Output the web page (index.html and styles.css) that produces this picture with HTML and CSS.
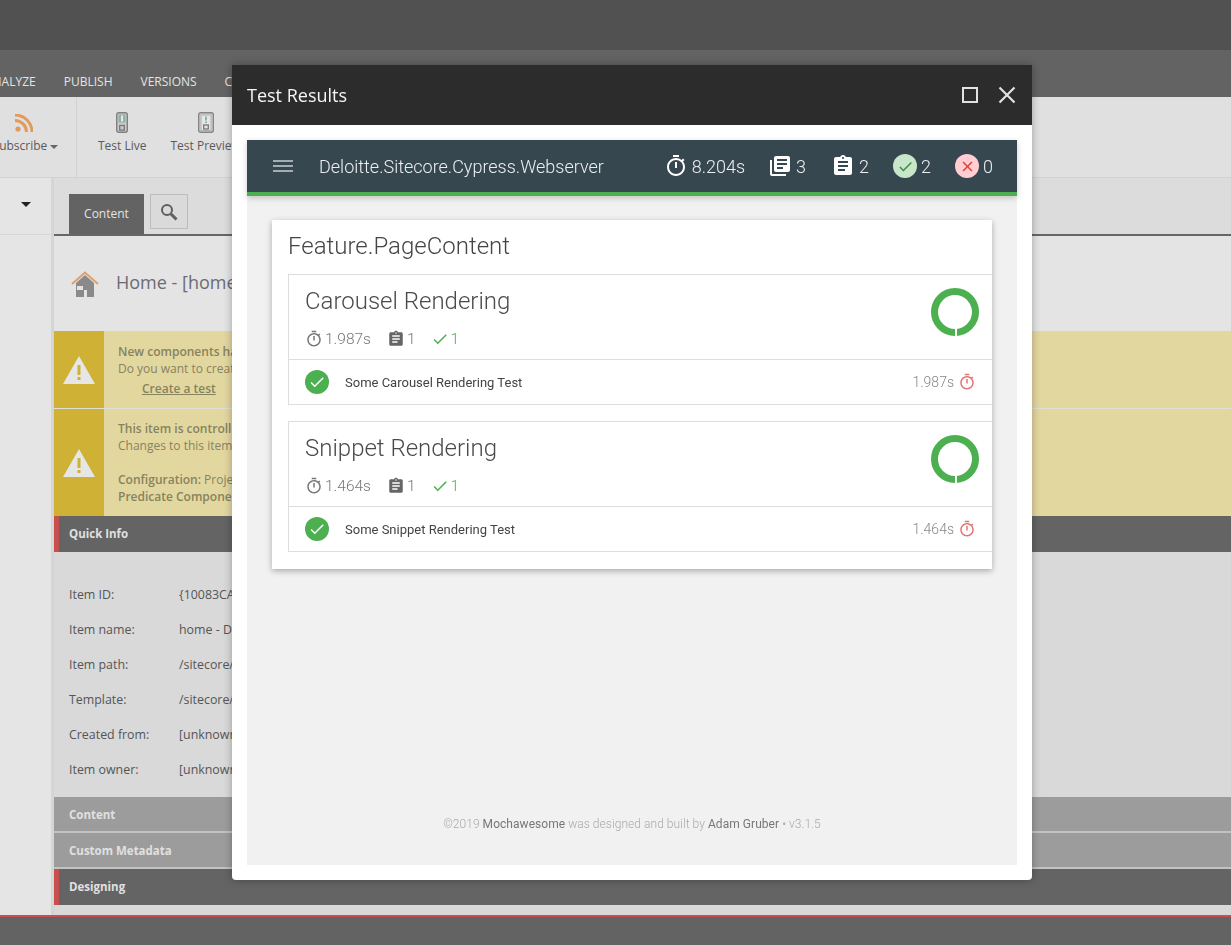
FILE: index.html
```html
<!DOCTYPE html>
<html lang="en">

<head>
    <meta charset="utf-8">
    <title>Test Results</title>
    <link rel="stylesheet" href="styles.css">
</head>

<body>
    <!-- material icons used by the report -->
    <svg class="defs" width="0" height="0">
        <symbol id="i-timer" viewBox="0 0 24 24"><path d="M15 1H9v2h6V1zm-4 13h2V8h-2v6zm8.03-6.61l1.42-1.42c-.43-.51-.9-.99-1.41-1.41l-1.42 1.42C16.07 4.74 14.12 4 12 4c-4.97 0-9 4.03-9 9s4.02 9 9 9 9-4.03 9-9c0-2.12-.74-4.07-1.97-5.61zM12 20c-3.87 0-7-3.13-7-7s3.13-7 7-7 7 3.13 7 7-3.13 7-7 7z"/></symbol>
        <symbol id="i-books" viewBox="0 0 24 24"><path d="M4 6H2v14c0 1.1.9 2 2 2h14v-2H4V6zm16-4H8c-1.1 0-2 .9-2 2v12c0 1.1.9 2 2 2h12c1.1 0 2-.9 2-2V4c0-1.1-.9-2-2-2zm-1 9H9V9h10v2zm-4 4H9v-2h6v2zm4-8H9V5h10v2z"/></symbol>
        <symbol id="i-assignment" viewBox="0 0 24 24"><path d="M19 3h-4.18C14.4 1.84 13.3 1 12 1c-1.3 0-2.4.84-2.82 2H5c-1.1 0-2 .9-2 2v14c0 1.1.9 2 2 2h14c1.1 0 2-.9 2-2V5c0-1.1-.9-2-2-2zm-7 0c.55 0 1 .45 1 1s-.45 1-1 1-1-.45-1-1 .45-1 1-1zm2 14H7v-2h7v2zm3-4H7v-2h10v2zm0-4H7V7h10v2z"/></symbol>
        <symbol id="i-check" viewBox="0 0 24 24"><path d="M9 16.17L4.83 12l-1.42 1.41L9 19 21 7l-1.41-1.41z"/></symbol>
        <symbol id="i-close" viewBox="0 0 24 24"><path d="M19 6.41L17.59 5 12 10.59 6.41 5 5 6.41 10.59 12 5 17.59 6.41 19 12 13.41 17.59 19 19 17.59 13.41 12z"/></symbol>
        <symbol id="i-warning" viewBox="0 0 32 28"><path d="M16 0L32 28H0z" fill="#e6e6e6"/><path d="M14.500 9h3v10h-3zM14.500 21h3v3h-3z" fill="#cfb135"/></symbol>
        <symbol id="i-live" viewBox="0 0 12 21"><rect x="0.700" y="0.700" width="10.600" height="19.600" rx="2" fill="#c9c9c9" stroke="#808080" stroke-width="1.400"/><rect x="2.500" y="2.500" width="7" height="8" fill="#8fb3a4"/><rect x="5" y="3.500" width="2" height="6" fill="#e8e8e8"/><rect x="3.700" y="13.500" width="4.600" height="4.600" fill="none" stroke="#777" stroke-width="1.300"/></symbol>
        <symbol id="i-preview" viewBox="0 0 16 21"><rect x="0.700" y="0.700" width="14.600" height="19.600" rx="2" fill="#d4d4d4" stroke="#858585" stroke-width="1.400"/><rect x="3" y="3" width="10" height="15.500" fill="#e6e6e6" stroke="#b0b0b0"/><rect x="7" y="4.500" width="2" height="4" fill="#8fb3a4"/><rect x="7" y="9.500" width="2" height="1.500" fill="#8fb3a4"/><rect x="5.700" y="13" width="4.600" height="4" fill="none" stroke="#777" stroke-width="1.300"/></symbol>
    </svg>

    <div class="app">
        <div class="topbar"></div>

        <nav class="menu">
            <span>Analyze</span>
            <span>Publish</span>
            <span>Versions</span>
            <span>Configure</span>
        </nav>

        <div class="ribbon">
            <div class="ribbon-group first">
                <svg class="rss" viewBox="0 0 18 18" width="18" height="18">
                    <circle cx="3" cy="15" r="2.600" fill="#e09a5c"/>
                    <path d="M0 6.500a11.500 11.500 0 0 1 11.500 11.500" fill="none" stroke="#e09a5c" stroke-width="3"/>
                    <path d="M0 1a17 17 0 0 1 17 17" fill="none" stroke="#e09a5c" stroke-width="3"/>
                </svg>
                <span class="ribbon-label">Subscribe <i class="caret"></i></span>
            </div>
            <div class="ribbon-group">
                <div class="ribbon-btn">
                    <svg width="12" height="21"><use href="#i-live"/></svg>
                    <span class="ribbon-label">Test Live</span>
                </div>
                <div class="ribbon-btn">
                    <svg width="16" height="21"><use href="#i-preview"/></svg>
                    <span class="ribbon-label">Test Preview</span>
                </div>
            </div>
        </div>

        <div class="main">
            <aside class="side">
                <div class="side-head"><i class="caret dark"></i></div>
            </aside>

            <section class="editor">
                <div class="tabs">
                    <div class="tab">Content</div>
                    <div class="search">
                        <svg viewBox="0 0 18 18" width="18" height="18">
                            <circle cx="7" cy="7" r="5" fill="none" stroke="#5f5f5f" stroke-width="2"/>
                            <path d="M11 11l5.500 5.500" stroke="#5f5f5f" stroke-width="3"/>
                        </svg>
                    </div>
                </div>

                <div class="page-head">
                    <svg viewBox="0 0 28 26" width="28" height="26">
                        <path d="M5 12L14 4l9 8v14h-7v-7h-3v7H5z" fill="#8a8a8a"/>
                        <rect x="6" y="15" width="6" height="4" fill="#e4e4e4"/>
                        <path d="M1 13L14 1.500 27 13" fill="none" stroke="#e09f6c" stroke-width="2"/>
                    </svg>
                    <span>Home - [home - Digital]</span>
                </div>

                <div class="warn warn-a">
                    <div class="warn-icon"><svg width="32" height="28"><use href="#i-warning"/></svg></div>
                    <div class="warn-text">
                        <b>New components have been added to this page.</b><br>
                        Do you want to create a test?
                        <a class="warn-link">Create a test</a>
                    </div>
                </div>
                <div class="warn warn-b">
                    <div class="warn-icon"><svg width="32" height="28"><use href="#i-warning"/></svg></div>
                    <div class="warn-text">
                        <b>This item is controlled by Unicorn</b><br>
                        Changes to this item will be written to disk.<br><br>
                        <b>Configuration:</b> Project.Website<br>
                        <b>Predicate Component:</b> SerializationPresetPredicate
                    </div>
                </div>

                <div class="section active">Quick Info</div>
                <dl class="info">
                    <div><dt>Item ID:</dt><dd>{10083CA1-0000}</dd></div>
                    <div><dt>Item name:</dt><dd>home - Digital</dd></div>
                    <div><dt>Item path:</dt><dd>/sitecore/content</dd></div>
                    <div><dt>Template:</dt><dd>/sitecore/templates</dd></div>
                    <div><dt>Created from:</dt><dd>[unknown]</dd></div>
                    <div><dt>Item owner:</dt><dd>[unknown]</dd></div>
                </dl>
                <div class="section muted">Content</div>
                <div class="section muted">Custom Metadata</div>
                <div class="section active">Designing</div>
            </section>
        </div>

        <div class="statusbar"></div>
    </div>

    <div class="modal">
        <header class="modal-head">
            <span class="modal-title">Test Results</span>
            <span class="modal-max"></span>
            <svg class="modal-close" viewBox="0 0 18 18" width="18" height="18"><path d="M1.500 1.500l15 15M16.500 1.500l-15 15" stroke="#e2e2e2" stroke-width="2.200"/></svg>
        </header>

        <div class="modal-body">
            <div class="report">
                <div class="navbar">
                    <span class="burger"><i></i><i></i><i></i></span>
                    <span class="report-name">Deloitte.Sitecore.Cypress.Webserver</span>
                    <ul class="stats">
                        <li class="gap-first"><svg class="ico24"><use href="#i-timer"/></svg>8.204s</li>
                        <li class="gap-a"><svg class="ico24"><use href="#i-books"/></svg>3</li>
                        <li class="gap-b"><svg class="ico24"><use href="#i-assignment"/></svg>2</li>
                        <li class="gap-b"><span class="badge ok"><svg><use href="#i-check"/></svg></span>2</li>
                        <li><span class="badge bad"><svg><use href="#i-close"/></svg></span>0</li>
                    </ul>
                </div>

                <div class="card">
                    <h3 class="card-title">Feature.PageContent</h3>

                    <div class="suite">
                        <div class="suite-head">
                            <div>
                                <h4>Carousel Rendering</h4>
                                <ul class="suite-stats">
                                    <li class="s-time"><svg><use href="#i-timer"/></svg>1.987s</li>
                                    <li class="s-count"><svg><use href="#i-assignment"/></svg>1</li>
                                    <li class="s-pass"><svg><use href="#i-check"/></svg>1</li>
                                </ul>
                            </div>
                            <svg class="donut" viewBox="0 0 48 48" width="48" height="48">
                                <circle cx="24" cy="24" r="20.500" fill="none" stroke="#4caf50" stroke-width="7"/>
                                <rect x="24" y="40" width="2" height="8" fill="#fff"/>
                            </svg>
                        </div>
                        <div class="test">
                            <span class="test-ok"><svg><use href="#i-check"/></svg></span>
                            <span class="test-name">Some Carousel Rendering Test</span>
                            <span class="test-time">1.987s</span>
                            <svg class="test-timer"><use href="#i-timer"/></svg>
                        </div>
                    </div>

                    <div class="suite">
                        <div class="suite-head">
                            <div>
                                <h4>Snippet Rendering</h4>
                                <ul class="suite-stats">
                                    <li class="s-time"><svg><use href="#i-timer"/></svg>1.464s</li>
                                    <li class="s-count"><svg><use href="#i-assignment"/></svg>1</li>
                                    <li class="s-pass"><svg><use href="#i-check"/></svg>1</li>
                                </ul>
                            </div>
                            <svg class="donut" viewBox="0 0 48 48" width="48" height="48">
                                <circle cx="24" cy="24" r="20.500" fill="none" stroke="#4caf50" stroke-width="7"/>
                                <rect x="24" y="40" width="2" height="8" fill="#fff"/>
                            </svg>
                        </div>
                        <div class="test">
                            <span class="test-ok"><svg><use href="#i-check"/></svg></span>
                            <span class="test-name">Some Snippet Rendering Test</span>
                            <span class="test-time">1.464s</span>
                            <svg class="test-timer"><use href="#i-timer"/></svg>
                        </div>
                    </div>
                </div>

                <footer class="report-foot">©2019 <b>Mochawesome</b> was designed and built by <b>Adam Gruber</b> • v3.1.5</footer>
            </div>
        </div>
    </div>
</body>

</html>
```

FILE: styles.css
```css
/* Page */
body {
    margin: 0;
    height: 945px;
    overflow: hidden;
    background-color: #636363;
    font-family: 'Open Sans', sans-serif;
}

.defs {
    position: absolute;
}

.app {
    display: flex;
    flex-direction: column;
    height: 945px;
}

/* Sitecore backdrop */
.topbar {
    height: 50px;
    background-color: #515151;
}

.menu {
    display: flex;
    align-items: center;
    gap: 28px;
    height: 47px;
    margin-left: -15px;
    padding-top: 15px;
    box-sizing: border-box;
    background-color: #636363;
    color: #e4e4e4;
    font-size: 12px;
    text-transform: uppercase;
}

.ribbon {
    display: flex;
    height: 80px;
    background-color: #e0e0e0;
    border-bottom: 1px solid #d2d2d2;
    color: #5a5a5a;
    font-size: 12px;
}

.ribbon-group {
    display: flex;
    gap: 24px;
    padding: 15px 0 0 21px;
}

.ribbon-group.first {
    flex-direction: column;
    align-items: center;
    gap: 5px;
    width: 97px;
    margin-left: -20px;
    padding: 17px 5px 0 0;
    border-right: 1px solid #d2d2d2;
    box-sizing: border-box;
}

.rss {
    margin-right: 4px;
}

.ribbon-btn {
    display: flex;
    flex-direction: column;
    align-items: center;
    gap: 4px;
}

.ribbon-label {
    white-space: nowrap;
}

.caret {
    display: inline-block;
    border: 4px solid transparent;
    border-top-color: #666;
    border-bottom: 0;
    vertical-align: middle;
}

.caret.dark {
    border-width: 5px 5px 0;
    border-top-color: #222;
}

.main {
    display: flex;
    height: 737px;
}

.side {
    flex: none;
    width: 51px;
    background-color: #e5e5e5;
    border-right: 3px solid #d5d5d5;
}

.side-head {
    display: flex;
    justify-content: flex-end;
    align-items: center;
    height: 57px;
    padding: 0 20px 4px 0;
    border-bottom: 1px solid #d6d6d6;
    box-sizing: border-box;
}

.editor {
    flex: 1;
    padding-bottom: 10px;
    box-sizing: border-box;
    background-color: #d9d9d9;
    color: #555;
    font-size: 12.400px;
}

.tabs {
    display: flex;
    gap: 6px;
    height: 58px;
    padding: 16px 0 0 15px;
    box-sizing: border-box;
    background-color: #dcdcdc;
    border-bottom: 2px solid #666;
}

.tab {
    width: 75px;
    height: 40px;
    background-color: #636363;
    color: #e4e4e4;
    font-size: 12px;
    line-height: 40px;
    text-align: center;
}

.search {
    display: flex;
    align-items: center;
    justify-content: center;
    width: 36px;
    height: 33px;
    background-color: #dadada;
    border: 1px solid #bdbdbd;
}

.page-head {
    display: flex;
    align-items: center;
    gap: 17px;
    height: 95px;
    padding: 0 0 0 17px;
    box-sizing: border-box;
    background-color: #e4e4e4;
    color: #6b6b75;
    font-size: 18px;
}

.page-head span {
    margin-bottom: 4px;
}

.warn {
    display: flex;
    background-color: #e3d7a0;
    color: #86835f;
    font-size: 12px;
    line-height: 17px;
}

.warn b {
    font-weight: 600;
}

.warn-a {
    height: 77px;
    border-bottom: 1px solid #e0e0d8;
}

.warn-b {
    height: 107px;
}

.warn-icon {
    display: flex;
    align-items: center;
    justify-content: center;
    flex: none;
    width: 50px;
    background-color: #cfb135;
}

.warn-text {
    padding: 12px 14px;
    white-space: nowrap;
}

.warn-b .warn-text {
    padding-top: 11px;
}

.warn-link {
    display: block;
    margin: 3px 0 0 24px;
    text-decoration: underline;
    font-weight: 600;
}

.section {
    height: 36px;
    padding-left: 15px;
    box-sizing: border-box;
    background-color: #9c9c9c;
    color: #e0e0e0;
    font-weight: 700;
    font-size: 11.500px;
    line-height: 35px;
}

.section.muted {
    border-bottom: 2px solid #c2c2c2;
}

.section.active {
    padding-left: 10px;
    border-left: 5px solid #c94f4f;
    background-color: #646464;
}

.info {
    height: 245px;
    margin: 0;
    padding-top: 25px;
    box-sizing: border-box;
}

.info div {
    display: flex;
    height: 35px;
    align-items: center;
}

.info dt {
    width: 110px;
    padding-left: 15px;
}

.info dd {
    margin: 0;
}

.statusbar {
    flex: 1;
    background-color: #636363;
    border-top: 2px solid #c94f4f;
}

/* Modal window */
.modal {
    position: absolute;
    top: 65px;
    left: 232px;
    display: flex;
    flex-direction: column;
    width: 800px;
    height: 815px;
    background-color: #fff;
    border-radius: 0 0 4px 4px;
    box-shadow: 0 0 8px rgba(0, 0, 0, 0.3);
    will-change: transform;
}

.modal-head {
    display: flex;
    align-items: center;
    flex: none;
    height: 60px;
    padding: 0 16px 0 15px;
    background-color: #2c2c2c;
}

.modal-title {
    flex: 1;
    color: #f5f5f5;
    font-size: 18px;
    font-weight: 500;
}

.modal-max {
    width: 12px;
    height: 12px;
    margin-right: 20px;
    border: 2px solid #e2e2e2;
}

.modal-body {
    flex: 1;
    display: flex;
    padding: 15px;
}

/* Mochawesome report */
.report {
    flex: 1;
    display: flex;
    flex-direction: column;
    background-color: #f1f1f1;
    font-family: 'Roboto', sans-serif;
}

.navbar {
    display: flex;
    align-items: center;
    flex: none;
    height: 52px;
    padding: 0 24px 0 26px;
    background-color: #37474f;
    border-bottom: 4px solid #4caf50;
    box-shadow: 0 2px 6px rgba(0, 0, 0, 0.2);
    color: #eceff1;
}

.burger {
    display: flex;
    flex-direction: column;
    gap: 3px;
    width: 20px;
    margin-right: 26px;
}

.burger i {
    height: 2px;
    background-color: #a3adb1;
}

.report-name {
    flex: 1;
    font-size: 18px;
    font-weight: 300;
}

.stats {
    display: flex;
    align-items: center;
    margin: 0;
    padding: 0;
    list-style: none;
    font-size: 18px;
    font-weight: 300;
}

.stats li {
    display: flex;
    align-items: center;
    gap: 4px;
}

.gap-first {
    margin-right: 23px;
}

.gap-a {
    margin-right: 25px;
}

.gap-b {
    margin-right: 24px;
}

.ico24 {
    width: 24px;
    height: 24px;
    fill: #fff;
}

.badge {
    display: flex;
    align-items: center;
    justify-content: center;
    width: 24px;
    height: 24px;
    border-radius: 50%;
}

.badge svg {
    width: 17px;
    height: 17px;
}

.badge.ok {
    background-color: #c8e6c9;
    fill: #388e3c;
}

.badge.bad {
    background-color: #ffcdd2;
    fill: #e53935;
}

.card {
    flex: none;
    width: 720px;
    height: 349px;
    margin: 24px 0 0 25px;
    padding-left: 16px;
    box-sizing: border-box;
    background-color: #fff;
    box-shadow: 0 2px 6px rgba(0, 0, 0, 0.3);
}

.card-title {
    height: 54px;
    margin: 0;
    color: #444;
    font-size: 24px;
    font-weight: 300;
    line-height: 52px;
}

.suite {
    height: 131px;
    margin-bottom: 16px;
    box-sizing: border-box;
    border: 1px solid #ddd;
    border-right: 0;
}

.suite-head {
    display: flex;
    justify-content: space-between;
    height: 85px;
    padding: 13px 13px 0 16px;
    box-sizing: border-box;
    border-bottom: 1px solid #ddd;
}

.suite-head h4 {
    margin: -1px 0 0;
    color: #4a4a4a;
    font-size: 24px;
    font-weight: 300;
    line-height: 28px;
}

.suite-stats {
    display: flex;
    margin: 14px 0 0;
    padding: 0;
    list-style: none;
    font-size: 15.500px;
    font-weight: 300;
    line-height: 20px;
}

.suite-stats li {
    display: flex;
    align-items: center;
    gap: 2px;
}

.suite-stats svg {
    width: 18px;
    height: 18px;
}

.s-time {
    color: #777;
    fill: #777;
    margin-right: 16px;
}

.s-count {
    color: #777;
    fill: #666;
    margin-right: 15px;
}

.s-pass {
    color: #4caf50;
    fill: #4caf50;
}

.donut {
    flex: none;
}

.test {
    display: flex;
    align-items: center;
    height: 44px;
    padding: 0 16px;
}

.test-ok {
    display: flex;
    align-items: center;
    justify-content: center;
    width: 24px;
    height: 24px;
    margin-right: 16px;
    border-radius: 50%;
    background-color: #4caf50;
    fill: #fff;
}

.test-ok svg {
    width: 18px;
    height: 18px;
}

.test-name {
    flex: 1;
    color: #444;
    font-size: 13px;
}

.test-time {
    color: #888;
    font-size: 14px;
    font-weight: 300;
}

.test-timer {
    width: 18px;
    height: 18px;
    margin-left: 4px;
    fill: #e57373;
}

.report-foot {
    margin-top: auto;
    padding-bottom: 34px;
    color: #aaa;
    font-size: 12px;
    font-weight: 300;
    letter-spacing: 0.05px;
    text-align: center;
}

.report-foot b {
    color: #777;
    font-weight: 400;
}
```
